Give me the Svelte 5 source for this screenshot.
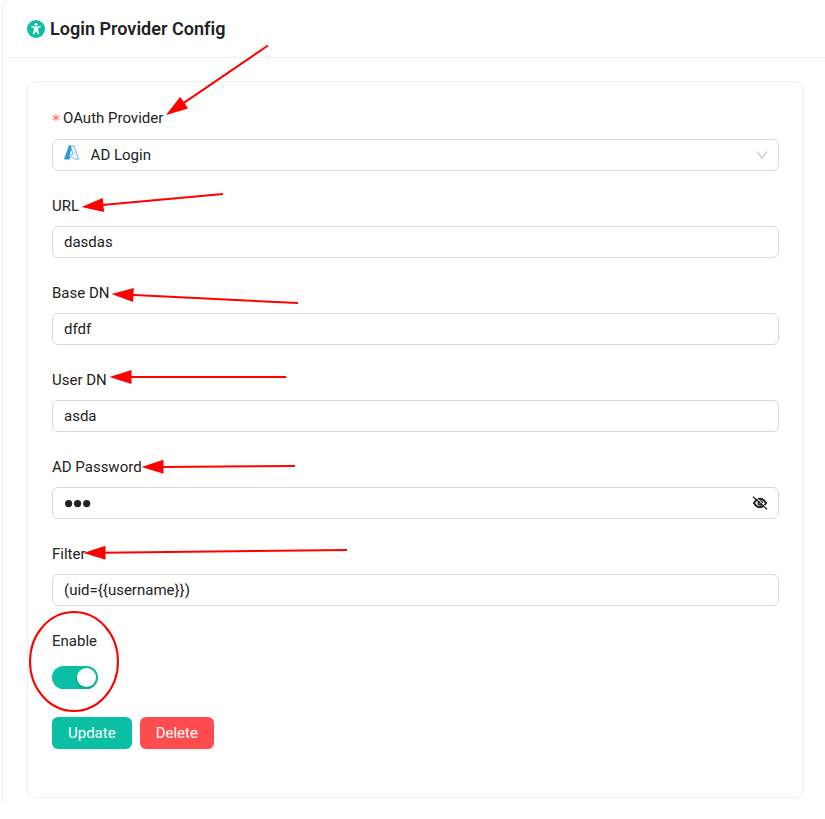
<script>
  let url = $state('dasdas');
  let base = $state('dfdf');
  let user = $state('asda');
  let filter = $state('(uid={{username}})');
  let enabled = $state(true);

  // Each arrow runs from its tail to the tip of its head.
  const arrows = [
    [268, 45.5, 166, 115],
    [223, 194, 81.5, 207],
    [298, 303, 111.5, 294],
    [286, 377, 109.5, 377],
    [295, 466, 141.5, 467],
    [347, 550, 83.5, 553]
  ].map(([x1, y1, x2, y2]) => ({
    x: x2,
    y: y2,
    length: Math.hypot(x1 - x2, y1 - y2),
    angle: (Math.atan2(y1 - y2, x1 - x2) * 180) / Math.PI
  }));
</script>

{#snippet field(label, value)}
  <div class="field">
    <div class="label">{label}</div>
    <div class="control">{value}</div>
  </div>
{/snippet}

<div class="page">
  <section class="panel">
    <header>
      <svg class="logo" viewBox="0 0 18 18" width="18" height="18">
        <circle cx="9" cy="9" r="9" fill="#0bbfa5" />
        <circle cx="9" cy="4.3" r="1.4" fill="#fff" />
        <path d="M4.5 5.7 8 6.6h2l3.5-.9.3 1.3-2.7 1.1v2l1.2 4-1.3.5L9.3 11.5h-.6L7 14.6l-1.3-.5 1.2-4v-2L4.2 7Z" fill="#fff" />
      </svg>
      <h1>Login Provider Config</h1>
    </header>
    <main>
      <form class="card">
        <div class="field">
          <div class="label first"><span class="required">*</span><span>OAuth Provider</span></div>
          <div class="control select">
            <svg class="azure" viewBox="0 0 16 16" width="16" height="16">
              <path d="M5 .9h5l4.7 13.2h-4.1L5.8 10l2-.6h1.4L7.3 3.6Z" fill="#fff" stroke="#4ba7df" stroke-width=".8" stroke-linejoin="round" />
              <path d="m8.4 1.2 4.2 12.6" stroke="#a9d5ef" stroke-width=".5" fill="none" />
              <path d="M4.9.6h2.2L7.6 4 6 8.8 5.4 10.5l1.2 1.2-1.2 2.7H.9Q-.1 14.4.3 13.2Z" fill="#2c9bdc" />
            </svg>
            <span class="provider">AD Login</span>
            <svg class="chevron" viewBox="0 0 12 12" width="12" height="12" fill="none">
              <path d="M1.2 2.5 6 9l4.8-6.5" stroke="#bfbfbf" stroke-width="1.1" />
            </svg>
          </div>
        </div>
        {@render field('URL', url)}
        {@render field('Base DN', base)}
        {@render field('User DN', user)}
        <div class="field">
          <div class="label">AD Password</div>
          <div class="control">
            <svg class="dots" viewBox="0 0 30 10" width="30" height="10" fill="#222">
              <circle cx="4.6" cy="5.6" r="3.6" />
              <circle cx="13.6" cy="5.6" r="3.6" />
              <circle cx="22.7" cy="5.6" r="3.6" />
            </svg>
            <svg class="eye" viewBox="0 0 16 14" width="16" height="14" fill="none" stroke="#222">
              <path d="M2 7Q4.5 2.8 8 2.8T14 7Q11.5 11.2 8 11.2T2 7Z" stroke-width="2" />
              <circle cx="8.3" cy="7" r="1.9" stroke-width="1.6" />
              <path d="m2.3 0 12.9 12" stroke="#fff" stroke-width="1" />
              <path d="m.9.8 14.2 12.4" stroke-width="1.3" />
            </svg>
          </div>
        </div>
        {@render field('Filter', filter)}
        <div class="field enable">
          <div class="label">Enable</div>
          <button type="button" class="switch" class:on={enabled} role="switch" aria-checked={enabled} aria-label="Enable" onclick={() => (enabled = !enabled)}>
            <span></span>
          </button>
        </div>
        <div class="actions">
          <button type="button" class="btn update">Update</button>
          <button type="button" class="btn delete">Delete</button>
        </div>
      </form>
    </main>
  </section>

  <svg class="marks" viewBox="0 0 825 819" width="825" height="819">
    {#each arrows as a}
      <g transform="translate({a.x} {a.y}) rotate({a.angle})">
        <path d="M18 0H{a.length}" stroke="#f00" stroke-width="2" />
        <path d="M0 0 22-7v14Z" fill="#f00" />
      </g>
    {/each}
    <ellipse cx="74" cy="661.5" rx="44" ry="49.5" fill="none" stroke="#f00" stroke-width="2" />
  </svg>
</div>

<style>
  :global(body) { background: #fff; }
  .page, .page * { box-sizing: border-box; }
  .page {
    position: relative;
    width: 825px;
    height: 819px;
    padding-left: 2px;
    overflow: hidden;
    font: 15px/23px Roboto, sans-serif;
    color: #222;
  }
  .panel {
    width: 840px;
    height: 804px;
    margin-top: -1px;
    border: 1px solid #f0f0f0;
    border-bottom: 0;
    border-radius: 8px 8px 0 0;
  }
  header {
    display: flex;
    align-items: center;
    gap: 5px;
    height: 58px;
    padding: 0 24px;
    border-bottom: 1px solid #f0f0f0;
  }
  .logo { flex: none; }
  h1 { margin: 0; font-size: 18px; line-height: 28px; font-weight: 600; letter-spacing: .02px; }
  main { padding: 23px 24px 0; }
  .card {
    width: 777px;
    height: 717px;
    padding: 26px 24px 24px;
    border: 1px solid #f0f0f0;
    border-radius: 8px;
  }
  .field { margin-bottom: 24px; }
  .label { height: 23px; margin-bottom: 8px; white-space: nowrap; }
  .first { display: flex; align-items: flex-start; height: 24px; margin: -1px 0 8px; }
  .required {
    width: 11px;
    padding-top: 2px;
    color: #ff5f61;
    font-family: "DejaVu Sans", sans-serif;
    font-size: 16px;
  }
  .control {
    display: flex;
    align-items: center;
    justify-content: space-between;
    height: 32px;
    padding: 0 11px;
    border: 1px solid #d9d9d9;
    border-radius: 6px;
  }
  .select { padding-right: 10px; }
  .azure { margin: -4px 10.6px 0 0; }
  .provider { flex: 1; }
  .eye { margin-right: -.5px; }
  .enable { height: 59px; margin-bottom: 28px; }
  .switch {
    display: flex;
    justify-content: flex-start;
    width: 46px;
    height: 23px;
    margin-top: 13px;
    padding: 2px;
    border: 0;
    border-radius: 12px;
    background: #bfbfbf;
  }
  .switch.on { justify-content: flex-end; background: #0bbfa5; }
  .switch span { width: 19px; height: 19px; border-radius: 50%; background: #fff; box-shadow: 0 2px 4px rgba(0, 35, 11, .2); }
  .actions { display: flex; gap: 8px; }
  .btn {
    height: 32px;
    padding: 0 16px;
    border: 0;
    border-radius: 6px;
    font: inherit;
    color: #fff;
  }
  .update { background: #0bbfa5; box-shadow: 0 2px 0 rgba(5, 255, 197, .06); }
  .delete { background: #ff4d4f; box-shadow: 0 2px 0 rgba(255, 38, 5, .06); }
  .marks { position: absolute; top: 0; left: 0; pointer-events: none; }
</style>
